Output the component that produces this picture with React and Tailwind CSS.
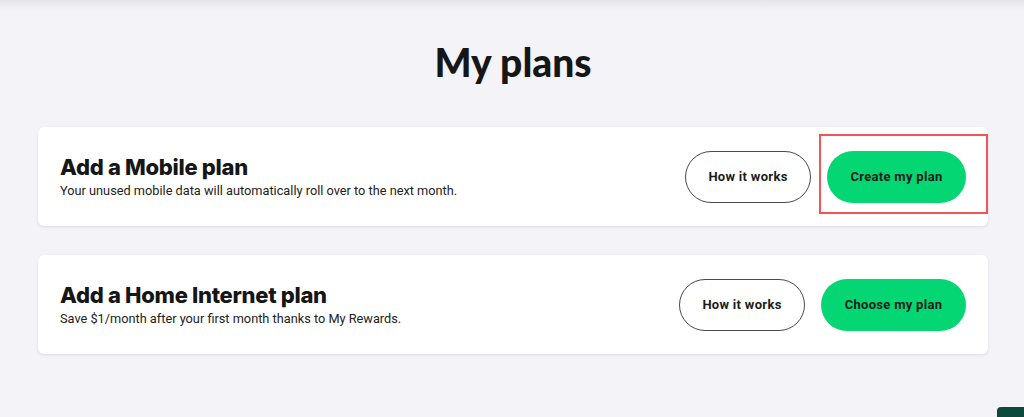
import React from 'react';

const plans = [
  {
    title: 'Add a Mobile plan',
    text: 'Your unused mobile data will automatically roll over to the next month.',
    cta: 'Create my plan',
    ctaWidth: 'w-[139px]',
    highlight: true,
  },
  {
    title: 'Add a Home Internet plan',
    text: 'Save $1/month after your first month thanks to My Rewards.',
    cta: 'Choose my plan',
    ctaWidth: 'w-[145px]',
    highlight: false,
  },
];

const PlanCard = ({ plan }) => (
  <div className="relative flex items-center justify-between rounded-md bg-white pl-[22px] pr-[22px] shadow-[0_1px_3px_rgba(20,20,40,0.10)] h-[99px]">
    <div className="flex flex-col">
      <h2 className="font-['Inter',sans-serif] text-[22px] font-extrabold leading-[26px] tracking-[-0.3px] text-[#161616]">
        {plan.title}
      </h2>
      <p className="mt-[2px] font-['Roboto',sans-serif] text-[12.75px] leading-[18px] text-[#222]">
        {plan.text}
      </p>
    </div>

    <div className="flex items-center gap-4">
      <button className="h-[52px] w-[126px] rounded-full border border-[#4a4a4a] bg-white font-['Roboto',sans-serif] text-[13px] font-bold tracking-[0.3px] text-[#1c1c1c]">
        How it works
      </button>
      <button className={`h-[52px] ${plan.ctaWidth} rounded-full bg-[#03d672] font-['Roboto',sans-serif] text-[13px] font-bold tracking-[0.3px] text-[#1c1c1c]`}>
        {plan.cta}
      </button>
    </div>

    {plan.highlight && (
      <div className="pointer-events-none absolute right-0 top-[7px] h-[80px] w-[169px] border-2 border-[#f05454]" />
    )}
  </div>
);

export default function App() {
  return (
    <div className="relative min-h-[417px] overflow-hidden bg-[#f4f3f8]">
      {/* faint top shadow */}
      <div className="absolute inset-x-0 top-0 h-[10px] bg-gradient-to-b from-[#e6e5ea] to-transparent" />

      <div className="pl-[38px] pr-[36px] pt-[38px]">
        <h1 className="text-center font-['Lato',sans-serif] text-[39px] font-black leading-[48px] text-[#161616]">
          My plans
        </h1>

        <div className="mt-[41px] flex flex-col gap-[29px]">
          {plans.map((p) => (
            <PlanCard key={p.title} plan={p} />
          ))}
        </div>
      </div>

      {/* chat widget peeking in */}
      <div className="absolute left-[997px] top-[407px] h-[20px] w-[40px] rounded-tl-[4px] bg-[#0c4a3b]" />
    </div>
  );
}
